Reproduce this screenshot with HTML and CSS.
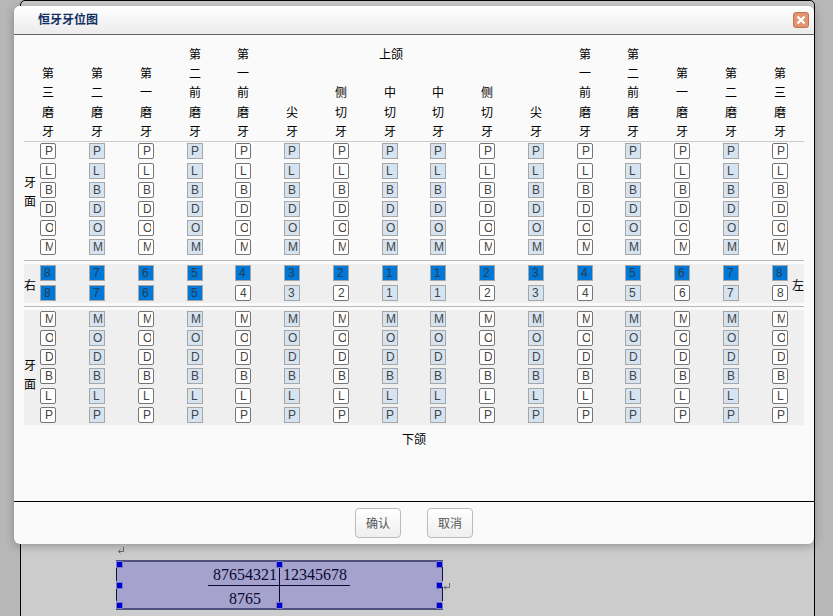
FILE: index.html
```html
<!DOCTYPE html>
<html lang="zh-CN">
<head>
<meta charset="utf-8">
<title>恒牙牙位图</title>
<link rel="stylesheet" href="styles.css">
</head>
<body>
<main class="page">
  <svg class="return return-top" viewBox="0 0 8 8"><path d="M6.5 0v4.5H2M3.5 2.5L1.5 4.5l2 2"/></svg>
  <div class="line">
    <div class="formula">
      <div class="quadrants">
        <span class="quad upper-left">87654321</span><span class="quad upper-right">12345678</span>
        <span class="quad lower-left">8765</span><span class="quad lower-right"></span>
      </div>
      <i class="handle left top"></i><i class="handle center top"></i><i class="handle right top"></i>
      <i class="handle left middle"></i><i class="handle right middle"></i>
      <i class="handle left bottom"></i><i class="handle center bottom"></i><i class="handle right bottom"></i>
    </div>
    <svg class="return return-inline" viewBox="0 0 8 8"><path d="M6.5 0v4.5H1M3 2.5L1 4.5l2 2"/></svg>
  </div>
</main>
<section class="dialog">
  <header class="dialog-header">
    <h1>恒牙牙位图</h1>
    <button class="close" aria-label="关闭"><svg viewBox="0 0 14 14"><path d="M3.5 3.5l7 7M10.5 3.5l-7 7"/></svg></button>
  </header>
  <div class="dialog-body">
    <div class="chart names" id="names"><span class="jaw">上颌</span></div>
    <div class="faces upper"><div class="side">牙面</div><div id="upper"></div></div>
    <div class="faces numbers"><div class="side">右</div><div id="numbers"></div><div class="side side-right">左</div></div>
    <div class="faces lower"><div class="side">牙面</div><div id="lower"></div></div>
    <div class="jaw-lower">下颌</div>
  </div>
  <footer class="dialog-footer"><button class="btn">确认</button><button class="btn">取消</button></footer>
</section>
<script src="chart.js"></script>
</body>
</html>
```
FILE: styles.css
```css
* { box-sizing: border-box; }
body {
  margin: 0;
  height: 616px;
  overflow: hidden;
  background: #b7b7b7;
  font: 12px "Liberation Sans", "Noto Sans CJK SC", sans-serif;
  color: #000;
}
.page {
  width: 795px;
  height: 630px;
  margin-left: 20px;
  padding: 546px 0 0 95px;
  border: 1px solid #000;
  border-radius: 5px 5px 0 0;
  background: #ccc;
}
.return { display: block; width: 8px; height: 8px; fill: none; stroke: #666; }
.return-top { margin-left: 1px; }
.line { display: flex; margin-top: 5px; }
.formula {
  position: relative;
  width: 327px;
  height: 50px;
  padding: 0 0 0 92px;
  background: #a5a3cd;
  border: solid #50507f;
  border-width: 2px 0;
}
.formula::before, .formula::after {
  content: "";
  position: absolute;
  top: 5px;
  bottom: 5px;
  width: 1px;
  background: repeating-linear-gradient(#11113a 0 14px, #a5a3cd 14px 20px);
}
.formula::before { left: 0; }
.formula::after { right: 0; }
.quadrants { display: grid; grid-template: 24px 23px / 72px 70px; }
.quad {
  font: 16px/25px "Liberation Serif", serif;
  color: #080832;
}
.upper-left, .lower-left { border-right: 1px solid #080832; }
.upper-left, .upper-right { border-bottom: 1px solid #080832; }
.upper-left { padding-left: 5px; }
.upper-right { padding-left: 3px; }
.lower-left { padding-left: 21px; }
.handle {
  position: absolute;
  width: 5px;
  height: 5px;
  background: #0000cd;
  box-shadow: 0 0 0 1px #7777cc;
}
.left { left: 1px; }
.center { left: 161px; }
.right { right: 1px; }
.top { top: 0; }
.middle { top: 21px; }
.bottom { bottom: 0; }
.return-inline { margin-top: 23px; }

.dialog {
  position: absolute;
  left: 14px;
  top: 6px;
  width: 800px;
  height: 538px;
  display: flex;
  flex-direction: column;
  background: #fafafa;
  border-radius: 6px;
  box-shadow: 0 2px 10px rgba(0, 0, 0, .28);
}
.dialog-header {
  flex: none;
  height: 29px;
  display: flex;
  align-items: center;
  justify-content: space-between;
  padding: 0 5px 0 24px;
  border-bottom: 1px solid #666;
  border-radius: 6px 6px 0 0;
  background: linear-gradient(#fff, #ebebeb);
}
h1 { margin: 0; font-size: 12px; line-height: 18px; color: #123063; }
.close {
  width: 16px;
  height: 16px;
  padding: 0;
  border: 1px solid #c5714f;
  border-radius: 3px;
  background: #e3936f;
}
.close svg { display: block; width: 14px; height: 14px; fill: none; stroke: #fff; stroke-width: 2.4; }
.dialog-body { flex: 1; padding: 0 10px; }
.chart {
  display: grid;
  grid-template-columns: 49px 49px 49px 48px 49px 49px 49px 48px 49px 49px 49px 48px 49px 49px 49px 24px;
}
.names {
  height: 107px;
  padding-left: 12px;
  border-bottom: 1px solid #ccc;
}
.name {
  grid-row: 1;
  align-self: end;
  width: 12px;
  margin: 0 0 -1px 6px;
  line-height: 19.25px;
  word-break: break-all;
}
.jaw { grid-area: 1 / 8; margin: 11px 0 0 1px; line-height: 19px; }
.faces { display: grid; grid-template-columns: 12px 756px 12px; }
.side { width: 12px; line-height: 19px; word-break: break-all; }
.upper { height: 119px; padding-top: 1px; border-bottom: 1px solid #b8b8b8; }
.upper .side { margin-top: 31px; }
.numbers {
  height: 39px;
  margin: 3px 0;
  padding-top: 1px;
  background: #efefef;
}
.numbers .side { margin-top: 12px; }
.lower {
  position: relative;
  height: 115px;
  margin-top: 7px;
  padding-top: 1px;
  background: #efefef;
}
.lower .side { margin-top: 46px; }
.lower::before {
  content: "";
  position: absolute;
  left: 0;
  right: 0;
  top: -4px;
  height: 1px;
  background: #b8b8b8;
}
.row { height: 19px; }
.row.tall { height: 20px; }
.cell {
  width: 16px;
  height: 16px;
  margin-left: 4px;
  padding-left: 4px;
  border: 1px solid #757575;
  border-radius: 2px;
  background: #fff;
  font-size: 12px;
  line-height: 14px;
  color: #444;
}
.cell > span { display: block; width: 8px; height: 14px; overflow: hidden; }
.cell.tinted { padding-left: 3px; border-color: #a6a6a6; border-radius: 0; background: #d6e4f2; }
.cell.tinted > span { width: 11px; }
.cell.selected { padding-left: 3px; border-color: #a6a6a6; border-radius: 0; background: #0078d7; color: #273d50; }
.jaw-lower { margin-top: 6px; text-align: center; line-height: 19px; }
.dialog-footer {
  flex: none;
  height: 43px;
  display: flex;
  justify-content: center;
  gap: 26px;
  padding-top: 6px;
  border-top: 1px solid #000;
}
.btn {
  width: 46px;
  height: 30px;
  padding: 0 0 1px;
  border: 1px solid #bbb;
  border-radius: 4px;
  background: linear-gradient(#fff, #efefef);
  font: inherit;
  color: #555;
}
```
FILE: chart.js
```js
const half = ["第三磨牙", "第二磨牙", "第一磨牙", "第二前磨牙", "第一前磨牙", "尖牙", "侧切牙", "中切牙"];
const names = [...half, "中切牙", "侧切牙", "尖牙", "第一前磨牙", "第二前磨牙", "第一磨牙", "第二磨牙", "第三磨牙"];
const numbers = [8, 7, 6, 5, 4, 3, 2, 1, 1, 2, 3, 4, 5, 6, 7, 8];

function addRow(parent, labels, selected, tall) {
  const row = document.createElement("div");
  row.className = "chart row" + (tall ? " tall" : "");
  labels.forEach((label, i) => {
    const cell = document.createElement("div");
    const tinted = numbers[i] % 2 === 1;
    cell.className = "cell" + (tinted ? " tinted" : "") + (i < selected ? " selected" : "");
    const text = document.createElement("span");
    text.textContent = label;
    cell.append(text);
    row.append(cell);
  });
  document.getElementById(parent).append(row);
}

names.forEach((name, i) => {
  const el = document.createElement("div");
  el.className = "name";
  el.style.gridColumn = i + 1;
  el.textContent = name;
  document.getElementById("names").append(el);
});
[..."PLBDOM"].forEach((c, i) => addRow("upper", Array(16).fill(c), 0, i === 0));
addRow("numbers", numbers, 16, true);
addRow("numbers", numbers, 4, false);
[..."MODBLP"].forEach((c, i) => addRow("lower", Array(16).fill(c), 0, i === 3));
```
